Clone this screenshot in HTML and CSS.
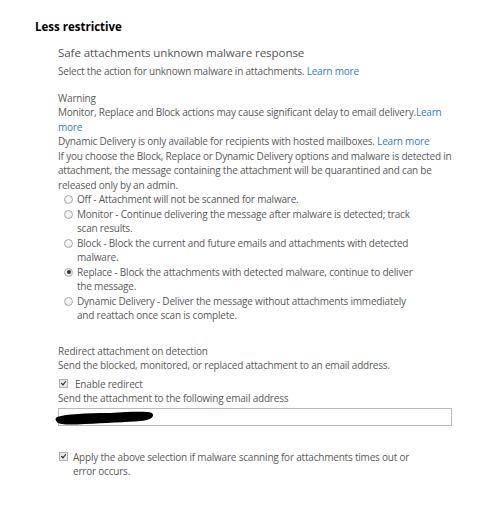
FILE: index.html
```html
<!DOCTYPE html>
<html>
<head>
<meta charset="utf-8">
<link rel="stylesheet" href="styles.css">
</head>
<body>
<h1 class="heading">Less restrictive</h1>
<section class="panel">
  <h2 class="title">Safe attachments unknown malware response</h2>
  <p class="line">Select the action for unknown malware in attachments. <a class="link">Learn more</a></p>

  <div class="warning">
    <p class="line">Warning</p>
    <p class="line">Monitor, Replace and Block actions may cause significant delay to email delivery.<a class="link">Learn</a></p>
    <p class="line"><a class="link">more</a></p>
    <p class="line">Dynamic Delivery is only available for recipients with hosted mailboxes. <a class="link">Learn more</a></p>
    <p class="line">If you choose the Block, Replace or Dynamic Delivery options and malware is detected in</p>
    <p class="line">attachment, the message containing the attachment will be quarantined and can be</p>
    <p class="line">released only by an admin.</p>
  </div>

  <ul class="options">
    <li class="option"><span class="radio"></span><span class="opt-text">Off - Attachment will not be scanned for malware.</span></li>
    <li class="option"><span class="radio"></span><span class="opt-text">Monitor - Continue delivering the message after malware is detected; track<br>scan results.</span></li>
    <li class="option"><span class="radio"></span><span class="opt-text">Block - Block the current and future emails and attachments with detected<br>malware.</span></li>
    <li class="option"><span class="radio checked"></span><span class="opt-text">Replace - Block the attachments with detected malware, continue to deliver<br>the message.</span></li>
    <li class="option"><span class="radio"></span><span class="opt-text">Dynamic Delivery - Deliver the message without attachments immediately<br>and reattach once scan is complete.</span></li>
  </ul>

  <div class="redirect">
    <p class="line">Redirect attachment on detection</p>
    <p class="line">Send the blocked, monitored, or replaced attachment to an email address.</p>
    <label class="check-row"><span class="checkbox"></span><span class="check-text">Enable redirect</span></label>
    <p class="line">Send the attachment to the following email address</p>
    <div class="input"><svg class="redact" width="100" height="17" viewBox="0 0 100 17"><path d="M2 8 C 12 5, 30 4, 55 4 C 75 3, 90 2, 97 4 C 100 7, 97 11, 86 12 C 70 13, 50 14, 30 15 C 15 16, 5 16, 2 13 C 0 11, 0 9, 2 8 Z" fill="#000"/></svg></div>
  </div>

  <label class="check-row apply"><span class="checkbox"></span><span class="check-text">Apply the above selection if malware scanning for attachments times out or<br>error occurs.</span></label>
</section>
</body>
</html>
```

FILE: styles.css
```css
html, body {
  margin: 0;
  padding: 0;
  background: #ffffff;
}
body {
  font-family: "Open Sans", "Noto Sans", sans-serif;
  color: #5a5a5a;
  width: 484px;
  height: 512px;
  overflow: hidden;
}
.heading {
  margin: 0;
  padding: 19px 0 0 35px;
  font-family: "Open Sans", sans-serif;
  font-weight: 700;
  font-size: 11.5px;
  line-height: 16px;
  color: #000000;
}
.panel {
  padding-left: 58px;
}
.title {
  margin: 10px 0 3px 0;
  font-weight: 400;
  font-size: 11.6px;
  line-height: 16px;
  color: #555555;
  letter-spacing: -0.1px;
}
.line {
  margin: 0;
  font-size: 10px;
  line-height: 14.5px;
  white-space: nowrap;
  letter-spacing: -0.2px;
}
.link {
  color: #2e7bcf;
}
.warning {
  margin-top: 12px;
}
.options {
  list-style: none;
  margin: 0;
  padding: 0 0 0 6px;
}
.option {
  display: flex;
  align-items: flex-start;
  gap: 4px;
  font-size: 10px;
  line-height: 14.5px;
  white-space: nowrap;
  letter-spacing: -0.2px;
}
.radio {
  flex: none;
  box-sizing: border-box;
  width: 9px;
  height: 9px;
  margin-top: 3px;
  border: 1px solid #a8a8a8;
  border-radius: 50%;
  background: radial-gradient(circle at 50% 40%, #ffffff 0%, #e4e4e4 100%);
  position: relative;
}
.radio.checked::after {
  content: "";
  position: absolute;
  left: 1.5px;
  top: 1.5px;
  width: 4px;
  height: 4px;
  border-radius: 50%;
  background: #333333;
}
.redirect {
  margin-top: 21px;
}
.check-row {
  display: flex;
  align-items: flex-start;
  gap: 7px;
  padding-left: 1px;
  font-size: 10px;
  line-height: 14.5px;
  white-space: nowrap;
  letter-spacing: -0.2px;
}
.redirect .check-row {
  margin-top: 4px;
}
.checkbox {
  flex: none;
  width: 7px;
  height: 7px;
  margin-top: 2px;
  border: 1px solid #b0b0b0;
  background: #e8e8e8;
  position: relative;
}
.checkbox::after {
  content: "";
  position: absolute;
  left: 2px;
  top: 0px;
  width: 2px;
  height: 4px;
  border: solid #222222;
  border-width: 0 1.5px 1.5px 0;
  transform: rotate(40deg);
}
.input {
  margin-top: 2px;
  width: 392px;
  height: 16px;
  border: 1px solid #b9b9b9;
  position: relative;
}
.redact {
  position: absolute;
  left: -4px;
  top: 0px;
}
.apply {
  margin-top: 24px;
  gap: 5px;
}
```
